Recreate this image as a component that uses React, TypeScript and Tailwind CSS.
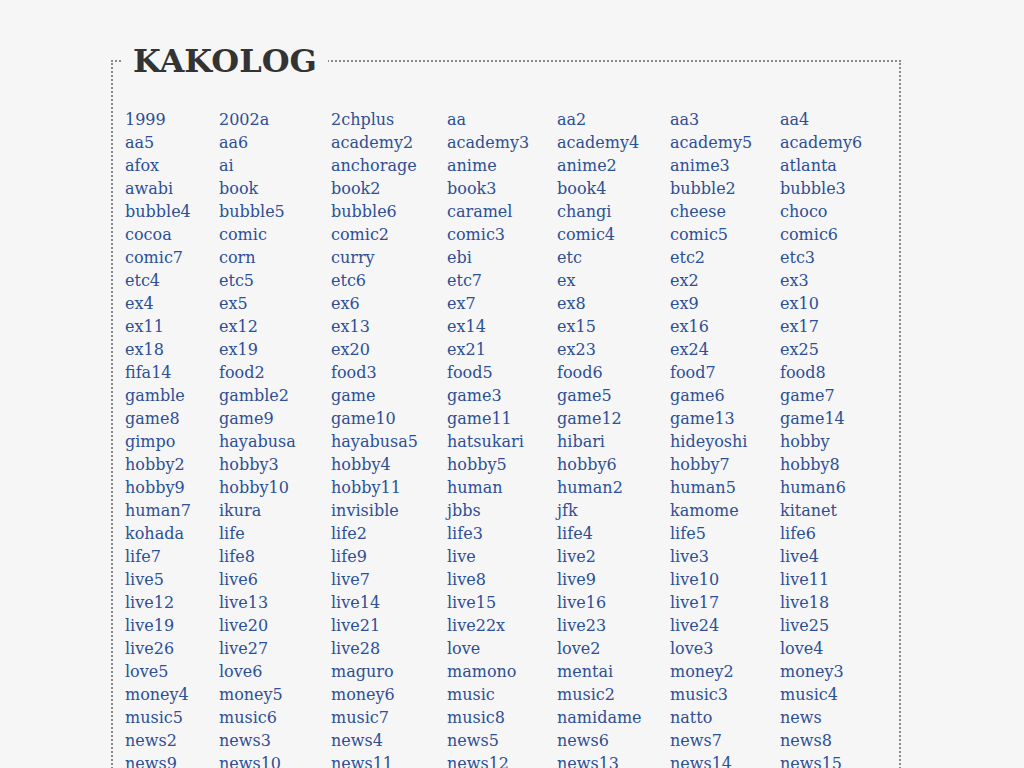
const rows: string[][] = [
  ["1999", "2002a", "2chplus", "aa", "aa2", "aa3", "aa4"],
  ["aa5", "aa6", "academy2", "academy3", "academy4", "academy5", "academy6"],
  ["afox", "ai", "anchorage", "anime", "anime2", "anime3", "atlanta"],
  ["awabi", "book", "book2", "book3", "book4", "bubble2", "bubble3"],
  ["bubble4", "bubble5", "bubble6", "caramel", "changi", "cheese", "choco"],
  ["cocoa", "comic", "comic2", "comic3", "comic4", "comic5", "comic6"],
  ["comic7", "corn", "curry", "ebi", "etc", "etc2", "etc3"],
  ["etc4", "etc5", "etc6", "etc7", "ex", "ex2", "ex3"],
  ["ex4", "ex5", "ex6", "ex7", "ex8", "ex9", "ex10"],
  ["ex11", "ex12", "ex13", "ex14", "ex15", "ex16", "ex17"],
  ["ex18", "ex19", "ex20", "ex21", "ex23", "ex24", "ex25"],
  ["fifa14", "food2", "food3", "food5", "food6", "food7", "food8"],
  ["gamble", "gamble2", "game", "game3", "game5", "game6", "game7"],
  ["game8", "game9", "game10", "game11", "game12", "game13", "game14"],
  ["gimpo", "hayabusa", "hayabusa5", "hatsukari", "hibari", "hideyoshi", "hobby"],
  ["hobby2", "hobby3", "hobby4", "hobby5", "hobby6", "hobby7", "hobby8"],
  ["hobby9", "hobby10", "hobby11", "human", "human2", "human5", "human6"],
  ["human7", "ikura", "invisible", "jbbs", "jfk", "kamome", "kitanet"],
  ["kohada", "life", "life2", "life3", "life4", "life5", "life6"],
  ["life7", "life8", "life9", "live", "live2", "live3", "live4"],
  ["live5", "live6", "live7", "live8", "live9", "live10", "live11"],
  ["live12", "live13", "live14", "live15", "live16", "live17", "live18"],
  ["live19", "live20", "live21", "live22x", "live23", "live24", "live25"],
  ["live26", "live27", "live28", "love", "love2", "love3", "love4"],
  ["love5", "love6", "maguro", "mamono", "mentai", "money2", "money3"],
  ["money4", "money5", "money6", "music", "music2", "music3", "music4"],
  ["music5", "music6", "music7", "music8", "namidame", "natto", "news"],
  ["news2", "news3", "news4", "news5", "news6", "news7", "news8"],
  ["news9", "news10", "news11", "news12", "news13", "news14", "news15"],
];

export default function App() {
  return (
    <div className="min-h-screen bg-[#f6f6f6] pt-[42px] pb-10 font-['DejaVu_Serif',serif]">
      <fieldset className="ml-[111px] w-[790px] border-2 border-dotted border-[#8a8a8a] px-0 pt-[28px] pb-6">
        <legend className="ml-[9px] px-[11px] text-[32px] leading-[38px] font-bold text-[#333]">
          KAKOLOG
        </legend>
        <div className="grid grid-cols-[94px_112px_116px_110px_113px_110px_1fr] px-[12px] text-[16px] leading-[23px]">
          {rows.flat().map((name, i) => (
            <a key={i} href="#" className="text-[#2d4f96] whitespace-nowrap">
              {name}
            </a>
          ))}
        </div>
      </fieldset>
    </div>
  );
}
